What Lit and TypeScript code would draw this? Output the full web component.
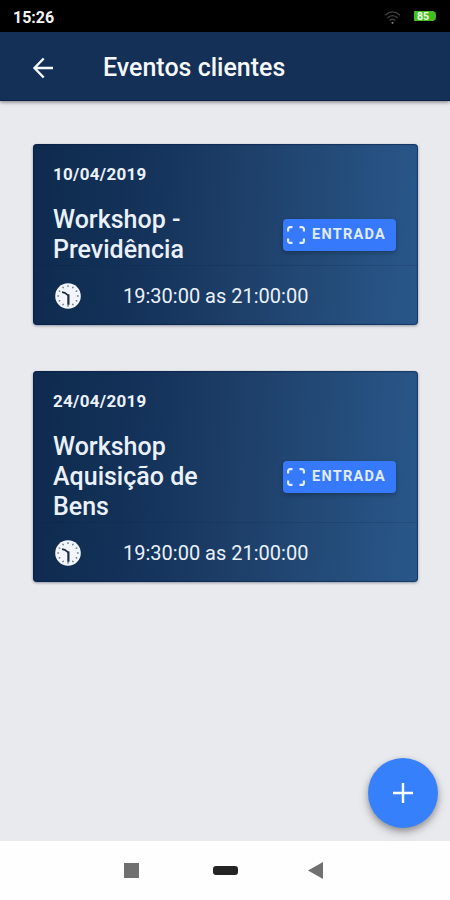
import { LitElement, html, css, svg } from "lit";
import { customElement, property } from "lit/decorators.js";

@customElement("event-card")
class EventCard extends LitElement {
  @property() date = "";
  @property({ attribute: false }) lines: string[] = [];
  @property() time = "";

  static styles = css`
    :host {
      display: block;
      border-radius: 4px;
      color: #eaf1fb;
      background: linear-gradient(93deg, #0e2a4e 0%, #14325a 28%, #1c3d66 50%, #234a77 74%, #29578a 100%);
      box-shadow: 0 1px 3px rgba(10, 20, 50, 0.4), inset 0 0 1px 1px rgba(5, 25, 65, 0.5);
    }
    .top { padding: 18px 22px 0 20px; }
    .date { font-size: 17px; line-height: 24px; font-weight: 700; letter-spacing: 0.3px; }
    .main { display: flex; align-items: center; justify-content: space-between; margin-top: 19px; }
    .title { font-size: 25px; line-height: 30px; font-weight: 500; white-space: nowrap; }
    .entry {
      display: flex; align-items: center; box-sizing: border-box;
      width: 113px; height: 32px; padding: 0 0 0 4px; border-radius: 4px;
      background: #3679fb; box-shadow: 0 2px 4px rgba(0, 0, 0, 0.25);
      font-size: 14.5px; line-height: 34px; font-weight: 700; letter-spacing: 1.25px; color: #e0ecff;
    }
    .entry svg { width: 18px; height: 18px; margin-right: 7px; flex: none; }
    .bottom {
      display: flex; align-items: center; box-sizing: border-box; height: 60px;
      border-top: 1px solid rgba(10, 30, 60, 0.16); padding: 0 0 0 22px;
    }
    .bottom svg { width: 26px; height: 26px; margin-right: 42px; flex: none; }
    .time { font-size: 20px; line-height: 24px; }
  `;

  render() {
    const ticks = Array.from({ length: 12 }, (_, i) =>
      svg`<path d="M13 2.3v1.8" transform="rotate(${i * 30} 13 13)" stroke="#56677f" stroke-width="1.2"/>`);
    return html`
      <div class="top">
        <div class="date">${this.date}</div>
        <div class="main">
          <div class="title">${this.lines.map((l) => html`<div>${l}</div>`)}</div>
          <div class="entry">
            <svg viewBox="0 0 18 18" fill="none" stroke="#e3eeff" stroke-width="2.2">
              <path d="M1.1 5.5V3.1a2 2 0 0 1 2-2h2.4M12.5 1.1h2.4a2 2 0 0 1 2 2v2.4M16.9 12.5v2.4a2 2 0 0 1-2 2h-2.4M5.5 16.9H3.1a2 2 0 0 1-2-2v-2.4"/>
            </svg>
            <span>ENTRADA</span>
          </div>
        </div>
      </div>
      <div class="bottom">
        <svg viewBox="0 0 26 26" fill="none">
          <circle cx="13" cy="13" r="12.8" fill="#f2f6fb"/>
          ${ticks}
          <path d="M7 9.2l2.8 .6 3.4 2.6" stroke="#1d2c44" stroke-width="1.7"/>
          <path d="M13.4 11.4V21.8" stroke="#1d2c44" stroke-width="2.2"/>
        </svg>
        <span class="time">${this.time}</span>
      </div>
    `;
  }
}

@customElement("app-root")
class AppRoot extends LitElement {
  static styles = css`
    :host {
      display: flex; flex-direction: column; width: 450px; height: 900px; overflow: hidden;
      background: #e9eaee; font-family: Roboto, "Liberation Sans", sans-serif;
    }
    .status {
      display: flex; align-items: center; box-sizing: border-box; height: 32px; flex: none;
      background: #000; color: #f4f4f4; padding: 2px 14px 0 13px;
    }
    .clock { flex: 1; font-size: 16px; font-weight: 700; }
    .wifi { width: 17px; height: 15px; margin-right: 13px; }
    .battery {
      width: 22px; height: 10px; background: #45bd22; border-radius: 1px 4px 4px 1px; margin: 0 0 2px 0;
      font-size: 10.5px; line-height: 11px; font-weight: 700; color: #f0ffe8; box-sizing: border-box; padding-left: 3px;
    }
    header {
      display: flex; align-items: center; box-sizing: border-box; height: 69px; flex: none;
      background: #143056; border-bottom: 1px solid #0a2244; color: #f6f8fc; padding: 3px 32px 0;
      box-shadow: 0 1px 4px rgba(0, 0, 0, 0.5);
    }
    header svg { width: 22px; height: 22px; margin-right: 49px; }
    h1 { margin: 0; font-size: 25px; line-height: 30px; font-weight: 500; }
    main { position: relative; flex: 1; padding: 43px 32px 0 33px; }
    event-card + event-card { margin-top: 46px; }
    .fab {
      position: absolute; right: 12px; bottom: 13px; width: 70px; height: 70px; border-radius: 50%;
      display: flex; align-items: center; justify-content: center;
      background: #3780fc; box-shadow: 0 3px 6px rgba(0, 0, 0, 0.3), 0 5px 12px rgba(0, 0, 0, 0.14);
    }
    .fab svg { width: 20px; height: 20px; }
    nav {
      display: flex; align-items: center; justify-content: center; box-sizing: border-box;
      height: 59px; flex: none; background: #fefefe; padding-bottom: 2px;
    }
    nav svg { width: 200px; height: 20px; margin-right: 2px; }
  `;

  render() {
    return html`
      <div class="status">
        <span class="clock">15:26</span>
        <svg class="wifi" viewBox="0 0 18 16" fill="none" stroke="#414141" stroke-width="1.5">
          <path d="M1 5.5Q9-1.5 17 5.5M3.5 8.5Q9 3.5 14.5 8.5M6 11.2Q9 8.5 12 11.2"/>
          <circle cx="9" cy="13.7" r="1.2" fill="#777" stroke="none"/>
        </svg>
        <span class="battery">85</span>
      </div>
      <header>
        <svg viewBox="0 0 22 22" fill="none" stroke="#f6f8fc" stroke-width="2.4">
          <path d="M11.7 1.5 2.5 11l9.2 9.5M2.5 11H21"/>
        </svg>
        <h1>Eventos clientes</h1>
      </header>
      <main>
        <event-card date="10/04/2019" .lines=${["Workshop -", "Previdência"]} time="19:30:00 as 21:00:00"></event-card>
        <event-card date="24/04/2019" .lines=${["Workshop", "Aquisição de", "Bens"]} time="19:30:00 as 21:00:00"></event-card>
        <div class="fab">
          <svg viewBox="0 0 20 20" stroke="#fff" stroke-width="2.4"><path d="M10 0V20M0 10H20"/></svg>
        </div>
      </main>
      <nav>
        <svg viewBox="0 0 200 20">
          <rect x="0" y="3" width="15" height="15" fill="#707070"/>
          <rect x="89" y="6" width="25" height="9" rx="3" fill="#242424"/>
          <path d="M184 10.5 199 2v17z" fill="#707070"/>
        </svg>
      </nav>
    `;
  }
}
